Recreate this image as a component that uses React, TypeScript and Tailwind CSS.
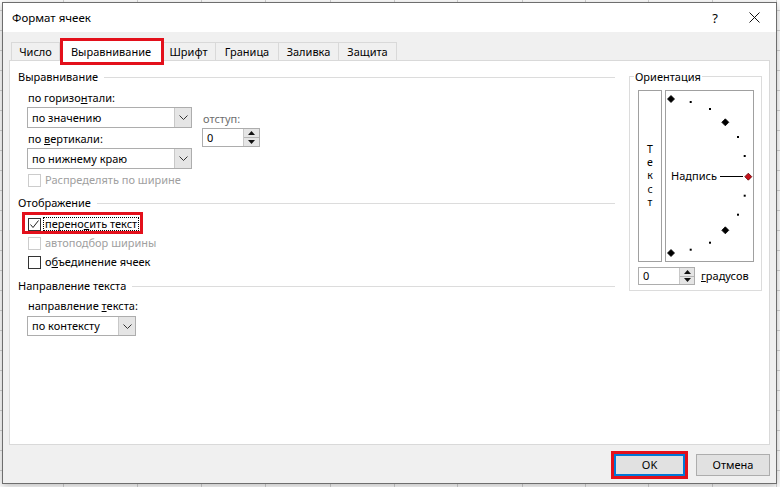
import React from "react";

const RED = "border-[#e3101b]";

function Chevron() {
  return (
    <svg width="9" height="5" viewBox="0 0 9 5">
      <path d="M0.5 0.5 L4.5 4.5 L8.5 0.5" fill="none" stroke="#333" strokeWidth="1" />
    </svg>
  );
}

function SelectBox({ text, wClass, hClass }: { text: string; wClass: string; hClass: string }) {
  return (
    <div className={`flex ${wClass} ${hClass} border border-[#adadad] bg-white`}>
      <div className="flex-1 flex items-center pl-[4px] text-black">{text}</div>
      <div className="w-[17px] flex items-center justify-center bg-[#e5e5e5] border-l border-[#c8c8c8]">
        <Chevron />
      </div>
    </div>
  );
}

function Spinner({ wClass, hClass, btnClass }: { wClass: string; hClass: string; btnClass: string }) {
  return (
    <div className={`flex ${wClass} ${hClass} border border-[#adadad] bg-white`}>
      <div className="flex-1 flex items-center pl-[4px] text-black">0</div>
      <div className={`${btnClass} flex flex-col bg-[#e5e5e5] border-l border-[#c8c8c8]`}>
        <div className="flex-1 flex items-center justify-center border-b border-[#b5b5b5]">
          <svg width="7" height="4" viewBox="0 0 7 4"><path d="M0 4 L3.5 0 L7 4 Z" fill="#111" /></svg>
        </div>
        <div className="flex-1 flex items-center justify-center">
          <svg width="7" height="4" viewBox="0 0 7 4"><path d="M0 0 L3.5 4 L7 0 Z" fill="#111" /></svg>
        </div>
      </div>
    </div>
  );
}

function Checkbox({ checked, disabled }: { checked?: boolean; disabled?: boolean }) {
  return (
    <div
      className={`w-[13px] h-[13px] border bg-white flex items-center justify-center shrink-0 ${
        disabled ? "border-[#cccccc]" : "border-[#333333]"
      }`}
    >
      {checked && (
        <svg width="11" height="11" viewBox="0 0 11 11">
          <path d="M1.5 5.5 L4 8.5 L9.5 1.5" fill="none" stroke="#222" strokeWidth="1" />
        </svg>
      )}
    </div>
  );
}

function GroupHeader({ text, mt }: { text: string; mt: string }) {
  return (
    <div className={`flex items-center h-[16px] ${mt}`}>
      <span className="text-black">{text}</span>
      <div className="flex-1 h-px bg-[#dcdcdc] ml-[6px]" />
    </div>
  );
}

function Diamond({ x, y, fill, stroke }: { x: number; y: number; fill: string; stroke: string }) {
  const r = 3.5;
  return (
    <polygon
      points={`${x},${y - r} ${x + r},${y} ${x},${y + r} ${x - r},${y}`}
      fill={fill}
      stroke={stroke}
      strokeWidth="0.8"
    />
  );
}

function Dial() {
  const dots: [number, number][] = [
    [24.7, 11],
    [44, 18],
    [72, 46],
    [78.7, 65],
    [78.7, 104.7],
    [72, 123.7],
    [44, 151.7],
    [24.7, 158.7],
  ];
  const bigs: [number, number][] = [
    [5, 8],
    [59.3, 31.3],
    [59.3, 139.3],
    [5, 162],
  ];
  return (
    <div className="relative w-[89px] h-[172px] border border-[#a0a0a0] bg-white">
      <svg className="absolute left-0 top-0" width="87" height="170" viewBox="0 0 87 170">
        {dots.map(([x, y], i) => (
          <rect key={i} x={x - 1} y={y - 1} width="2" height="2" fill="#000" />
        ))}
        {bigs.map(([x, y], i) => (
          <Diamond key={i} x={x} y={y} fill="#000" stroke="#000" />
        ))}
        <line x1="54" y1="85.5" x2="77" y2="85.5" stroke="#000" strokeWidth="1" />
        <Diamond x={82.3} y={85.7} fill="#c8101a" stroke="#5a0000" />
      </svg>
      <span className="absolute left-[5px] top-[77px] h-[16px] leading-[16px] text-black">Надпись</span>
    </div>
  );
}

export default function App() {
  const gridX = [63, 137, 201, 265, 330, 394, 457, 522, 585, 648, 712, 776];
  const gridY = Array.from({ length: 25 }, (_, i) => 10 + i * 20);
  return (
    <div className="relative w-[780px] h-[487px] overflow-hidden bg-white font-['Noto_Sans',sans-serif] text-[11px] leading-[16px] text-black">
      <svg className="absolute inset-0" width="780" height="487">
        {gridX.map((x) => (
          <line key={"x" + x} x1={x + 0.5} y1="0" x2={x + 0.5} y2="487" stroke="#d4d4d4" />
        ))}
        {gridY.map((y) => (
          <line key={"y" + y} x1="0" y1={y + 0.5} x2="780" y2={y + 0.5} stroke="#d4d4d4" />
        ))}
      </svg>

      <div className="absolute left-[2px] top-[2px] w-[775px] h-[482px] border border-[#6e6e6e] bg-[#f0f0f0] flex flex-col shadow-[0_2px_8px_rgba(0,0,0,0.28)]">
        {/* Title bar */}
        <div className="h-[29px] bg-white flex items-center pl-[9px] shrink-0 text-[11.5px]">
          <span className="flex-1">Формат ячеек</span>
          <span className="w-[20px] text-center text-[13px] mr-[24px]">?</span>
          <svg className="mr-[16px]" width="11" height="11" viewBox="0 0 11 11">
            <path d="M0.5 0.5 L10.5 10.5 M10.5 0.5 L0.5 10.5" stroke="#111" strokeWidth="1" />
          </svg>
        </div>

        {/* Body */}
        <div className="flex-1 flex flex-col px-[6px]">
          {/* Tabs */}
          <div className="h-[28px] flex items-end pl-[2px] shrink-0">
            <div className="w-[49px] h-[18px] border border-b-0 border-[#d9d9d9] flex items-center justify-center">Число</div>
            <div className="relative z-10 w-[102px] h-[22px] -mb-px bg-white border border-b-0 border-[#d9d9d9] flex items-center justify-center pt-[2px]">
              Выравнивание
              <span className={`absolute left-[-1px] top-[-2px] w-[104px] h-[27px] border-[3px] ${RED}`} />
            </div>
            <div className="w-[54px] h-[18px] border border-b-0 border-l-0 border-[#d9d9d9] flex items-center justify-center">Шрифт</div>
            <div className="w-[63px] h-[18px] border border-b-0 border-l-0 border-[#d9d9d9] flex items-center justify-center">Граница</div>
            <div className="w-[60px] h-[18px] border border-b-0 border-l-0 border-[#d9d9d9] flex items-center justify-center">Заливка</div>
            <div className="w-[58px] h-[18px] border border-b-0 border-l-0 border-[#d9d9d9] flex items-center justify-center">Защита</div>
          </div>

          {/* Panel */}
          <div className="h-[385px] border border-[#d9d9d9] bg-white flex shrink-0">
            {/* Left column */}
            <div className="w-[605px] pl-[8px] flex flex-col">
              <GroupHeader text="Выравнивание" mt="mt-[8px]" />
              <div className="flex pl-[9px]">
                <div className="flex flex-col w-[165px]">
                  <div className="h-[16px] mt-[5px] pl-[1px]">
                    по горизо<u>н</u>тали:
                  </div>
                  <div className="mt-[1px]">
                    <SelectBox text="по значению" wClass="w-[165px]" hClass="h-[21px]" />
                  </div>
                  <div className="h-[16px] mt-[3px] pl-[1px]">
                    по <u>в</u>ертикали:
                  </div>
                  <div className="mt-[1px]">
                    <SelectBox text="по нижнему краю" wClass="w-[165px]" hClass="h-[21px]" />
                  </div>
                </div>
                <div className="flex flex-col ml-[10px]">
                  <div className="h-[16px] mt-[26px] text-[#6d6d6d] pl-[1px]">отступ:</div>
                  <div className="mt-[1px]">
                    <Spinner wClass="w-[58px]" hClass="h-[19px]" btnClass="w-[16px]" />
                  </div>
                </div>
              </div>
              <div className="flex items-center h-[16px] mt-[3px] pl-[10px]">
                <Checkbox disabled />
                <span className="ml-[4px] text-[#a0a0a0]">Распределять по ширине</span>
              </div>

              <GroupHeader text="Отображение" mt="mt-[7px]" />
              <div className="relative flex items-center h-[16px] mt-[5px] ml-[10px]">
                <Checkbox checked />
                <span className="ml-[2px] px-[1px] h-[14px] leading-[12px] border border-dotted border-black whitespace-nowrap">
                  перено<u>с</u>ить текст
                </span>
                <span className={`absolute left-[-6px] top-[-4px] w-[121px] h-[22px] border-[3px] ${RED}`} />
              </div>
              <div className="flex items-center h-[16px] mt-[3px] pl-[10px]">
                <Checkbox disabled />
                <span className="ml-[4px] text-[#a0a0a0]">автоподбор ширины</span>
              </div>
              <div className="flex items-center h-[16px] mt-[3px] pl-[10px]">
                <Checkbox />
                <span className="ml-[4px]">
                  о<u>б</u>ъединение ячеек
                </span>
              </div>

              <GroupHeader text="Направление текста" mt="mt-[8px]" />
              <div className="h-[16px] mt-[4px] pl-[10px]">
                направление <u>т</u>екста:
              </div>
              <div className="mt-[2px] pl-[9px]">
                <SelectBox text="по контексту" wClass="w-[109px]" hClass="h-[20px]" />
              </div>
            </div>

            {/* Orientation */}
            <div className="ml-[14px] mt-[15px] relative w-[133px] h-[215px] border border-[#dcdcdc] pl-[8px] pt-[13px]">
              <span className="absolute left-[4px] top-[-8px] h-[16px] bg-white px-[1px]">Ориентация</span>
              <div className="flex">
                <div className="w-[24px] h-[172px] border border-[#a0a0a0] flex flex-col items-center justify-center">
                  <span className="h-[13.4px] leading-[13.4px] text-[10.5px]">Т</span>
                  <span className="h-[13.4px] leading-[13.4px] text-[10.5px]">е</span>
                  <span className="h-[13.4px] leading-[13.4px] text-[10.5px]">к</span>
                  <span className="h-[13.4px] leading-[13.4px] text-[10.5px]">с</span>
                  <span className="h-[13.4px] leading-[13.4px] text-[10.5px]">т</span>
                </div>
                <div className="ml-[3px]">
                  <Dial />
                </div>
              </div>
              <div className="flex items-center mt-[5px]">
                <Spinner wClass="w-[57px]" hClass="h-[18px]" btnClass="w-[15px]" />
                <span className="ml-[6px]">
                  <u>г</u>радусов
                </span>
              </div>
            </div>
          </div>

          {/* Footer */}
          <div className="flex-1 flex items-center justify-end pt-[2px]">
            <div className={`border-[3px] ${RED}`}>
              <div className="w-[71px] h-[22px] bg-[#e1e1e1] border-2 border-[#0078d7] flex items-center justify-center">OK</div>
            </div>
            <div className="ml-[8px] w-[74px] h-[22px] bg-[#e1e1e1] border border-[#adadad] flex items-center justify-center">Отмена</div>
          </div>
        </div>
      </div>
    </div>
  );
}
